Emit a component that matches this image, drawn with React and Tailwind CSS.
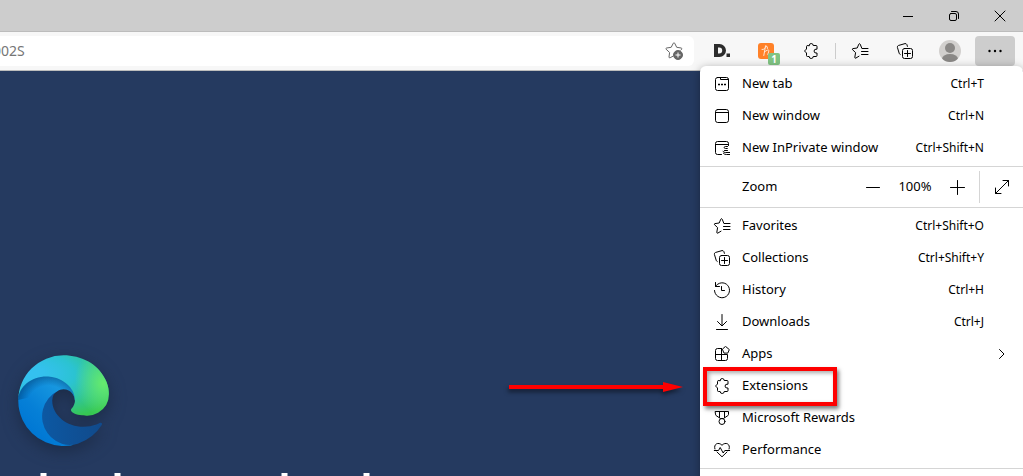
const Icon = ({ children, className = 'size-4' }) => (
  <svg viewBox="0 0 16 16" fill="none" stroke="currentColor" strokeLinecap="round" strokeLinejoin="round" className={`shrink-0 ${className}`} aria-hidden="true">
    {children}
  </svg>
);

const TabIcon = () => (
  <Icon>
    <rect x="1.5" y="1.5" width="13" height="13" rx="2" />
    <path d="M6.5 1.5v2h8" />
    <path d="M4 8.5h2M7 8.5h2M10 8.5h2" strokeWidth="1.5" strokeLinecap="butt" />
  </Icon>
);

const WindowIcon = () => (
  <Icon>
    <rect x="1.5" y="1.5" width="13" height="13" rx="2.2" />
    <path d="M1.5 4.5h13" />
  </Icon>
);

const PrivateIcon = () => (
  <Icon>
    <path d="M7.5 14.5h-4a2 2 0 0 1-2-2v-9a2 2 0 0 1 2-2h9a2 2 0 0 1 2 2v2M1.5 4.5h13" />
    <path d="M13.5 6.5h-2q-1.3 0-1.3 1t1.3 1h1.8M13.5 10.5h-3M16 12.5h-4.5q-1.5 0-2.5-1M16 14.5h-3.5q-2 0-3-1" />
  </Icon>
);

const FavoritesIcon = () => (
  <Icon className="size-4 overflow-visible">
    <path d="M13 5.500H9.900L8.200 1.200q-.7-1.200-1.400 0L5.200 5 .9 5.600q-1.100.3-.4 1.100l3.100 2.900-.8 4.700q-.1 1.200 1 .8l3.200-1.900" />
    <path d="M10.500 5.500H16M9.500 8.500H16M9.500 11.500H16" />
  </Icon>
);

const CollectionsIcon = () => (
  <Icon className="size-4 overflow-visible">
    <path d="M3.200 11.500q-.8-.3-1-1.200L.4 4.400q-.3-1.400 1-1.900L8 .6q1.300-.2 1.900 1l.5 1.800" />
    <rect x="5.500" y="5.500" width="10" height="10" rx="2" />
    <path d="M10.500 7.500v6M7.500 10.500h6" />
  </Icon>
);

const HistoryIcon = () => (
  <Icon className="size-4 overflow-visible">
    <path d="M1.500.5v4h4" />
    <path d="M1.500 4.500A7.500 7.500 0 1 1 .5 8.500M7.500 4.500v4h3" />
  </Icon>
);

const DownloadIcon = () => (
  <Icon>
    <path d="M8 .5v11M3.500 7.500 8 12l4.500-4.500M2.500 15.500h11" />
  </Icon>
);

const AppsIcon = () => (
  <Icon>
    <path d="M7.500 2.500h-4a2 2 0 0 0-2 2v8a2 2 0 0 0 2 2h8a2 2 0 0 0 2-2v-4h-12M7.500 2.500v12" />
    <path d="m11.800.6 3.500 3-1.500 3.500h-3.800L8.500 3.600z" />
  </Icon>
);

const PuzzleIcon = () => (
  <Icon>
    <path d="M6.200 2.500a2 2 0 0 1 4 0H13q1 0 1 1v2.700h-1a1.900 1.900 0 0 0 0 3.800h1v2.500q0 1-1 1h-2.800a2 2 0 0 1-4 0H4.500q-1 0-1-1V10L1.500 8l2-2V3.500q0-1 1-1z" />
  </Icon>
);

const RewardsIcon = () => (
  <Icon>
    <path d="M1.500 1.500h13v3q0 .7-.6 1.100L9.500 8.500h-3L2.100 5.600q-.6-.4-.6-1.100zM5.500 1.500v6M10.500 1.500v6" />
    <circle cx="8" cy="11.500" r="3" />
  </Icon>
);

const PerformanceIcon = () => (
  <Icon className="size-4 overflow-visible">
    <path d="M.9 7C-.8 2 4.500-.6 8 3.300 11.500-.6 16.800 2 15.100 7M3 10l5 4.800 5-4.800" />
    <path d="M.3 8.500h4.200l1.700-3 3 5.500 1.600-2.500h4.900" />
  </Icon>
);

const SWIRL = 'M156.94 153.78c-.81 1.05-3.3 2.5-3.3 5.66 0 2.61 1.7 5.12 4.72 7.23 14.38 10 41.49 8.68 41.56 8.68a59.56 59.56 0 0 0 30.27-8.35A61.38 61.38 0 0 0 260.62 114.12c.26-22.41-8-37.31-11.34-43.91C228.09 28.76 182.35 4.92 132.61 4.92a128 128 0 0 0-128 126.2c.48-36.54 36.8-66.05 80-66.05 3.5 0 23.46.34 42 10.07 16.34 8.58 24.9 18.94 30.85 29.21 6.18 10.67 7.28 24.15 7.28 29.52s-2.74 13.33-7.8 19.91z';

const EdgeLogo = () => (
  <svg viewBox="4 4 257 257" className="size-[91px] overflow-visible drop-shadow-[0_5px_8px_rgba(25,40,65,0.8)]" role="img" aria-label="Microsoft Edge">
    <defs>
      <linearGradient id="deep" x1="63" x2="241" y1="177" y2="177" gradientUnits="userSpaceOnUse">
        <stop stopColor="#0c59a4" />
        <stop offset="1" stopColor="#114a8b" />
      </linearGradient>
      <linearGradient id="blue" x1="157" x2="46" y1="100" y2="221" gradientUnits="userSpaceOnUse">
        <stop stopColor="#1b9de2" />
        <stop offset=".2" stopColor="#1595df" />
        <stop offset=".67" stopColor="#0680d7" />
        <stop offset="1" stopColor="#0078d4" />
      </linearGradient>
      <radialGradient id="shade" cx="90" cy="152" r="88" gradientUnits="userSpaceOnUse">
        <stop offset=".7" stopColor="#003b70" stopOpacity="0" />
        <stop offset="1" stopColor="#003b70" stopOpacity=".45" />
      </radialGradient>
      <radialGradient id="cyan" cx="0" cy="0" r="202" gradientUnits="userSpaceOnUse" gradientTransform="matrix(-.04 1 -2.13 -.08 30 55)">
        <stop stopColor="#35c1f1" />
        <stop offset=".11" stopColor="#34c1ed" />
        <stop offset=".23" stopColor="#2fc2df" />
        <stop offset=".31" stopColor="#2bc3d2" />
        <stop offset=".67" stopColor="#36c752" />
      </radialGradient>
      <radialGradient id="lime" cx="0" cy="0" r="97" gradientUnits="userSpaceOnUse" gradientTransform="matrix(.28 .96 -.78 .23 245 84)">
        <stop stopColor="#66eb6e" />
        <stop offset="1" stopColor="#66eb6e" stopOpacity="0" />
      </radialGradient>
    </defs>
    <path fill="url(#deep)" d="M235.68 195.46a93.73 93.73 0 0 1-10.54 4.71 101.87 101.87 0 0 1-35.9 6.46c-47.32 0-88.54-32.55-88.54-74.32A31.48 31.48 0 0 1 117.13 105c-42.8 1.8-53.8 46.4-53.8 72.53 0 73.88 68.09 81.37 82.76 81.37 7.91 0 19.84-2.3 27-4.56l1.31-.44A128.34 128.34 0 0 0 241 201.1a4.1 4.1 0 0 0-5.32-5.64z" />
    <path fill="url(#blue)" d="M110.34 246.34A79.2 79.2 0 0 1 87.6 225a80.72 80.72 0 0 1 29.53-120c3.12-1.47 8.45-4.05 15.54-4a32.35 32.35 0 0 1 25.69 13 31.88 31.88 0 0 1 6.36 18.66c0-.21 24.46-79.6-80-79.6-43.9 0-80 41.66-80 78.21a130.15 130.15 0 0 0 12.11 56 128 128 0 0 0 156.38 67.11 75.55 75.55 0 0 1-62.78-8z" />
    <path fill="url(#shade)" d="M117.13 105c3.12-1.47 8.45-4.05 15.54-4a32.35 32.35 0 0 1 25.69 13 31.88 31.88 0 0 1 6.36 18.66c0-.21 24.46-79.6-80-79.6-43.9 0-80 41.66-80 78.21z" />
    <path fill="url(#cyan)" d={SWIRL} />
    <path fill="url(#lime)" d={SWIRL} />
  </svg>
);

const windowItems = [
  { label: 'New tab', keys: 'Ctrl+T', icon: <TabIcon /> },
  { label: 'New window', keys: 'Ctrl+N', icon: <WindowIcon /> },
  { label: 'New InPrivate window', keys: 'Ctrl+Shift+N', icon: <PrivateIcon /> },
];

const toolItems = [
  { label: 'Favorites', keys: 'Ctrl+Shift+O', icon: <FavoritesIcon /> },
  { label: 'Collections', keys: 'Ctrl+Shift+Y', icon: <CollectionsIcon /> },
  { label: 'History', keys: 'Ctrl+H', icon: <HistoryIcon /> },
  { label: 'Downloads', keys: 'Ctrl+J', icon: <DownloadIcon /> },
  { label: 'Apps', submenu: true, icon: <AppsIcon /> },
  { label: 'Extensions', marked: true, icon: <PuzzleIcon /> },
  { label: 'Microsoft Rewards', icon: <RewardsIcon /> },
  { label: 'Performance', icon: <PerformanceIcon /> },
];

// red frame and arrow that point at a menu entry
const Marker = () => (
  <>
    <span className="pointer-events-none absolute -top-[3px] left-[3px] h-[39px] w-[134px] border-4 border-[#fe0000] shadow-[2px_3px_4px_rgba(0,0,0,0.5),inset_2px_2px_4px_rgba(0,0,0,0.35)]" />
    <svg viewBox="0 0 174 12" className="absolute top-[11px] right-full mr-[17px] h-3 w-[174px] overflow-visible drop-shadow-[-1px_3px_2px_rgba(0,0,0,0.5)]" aria-hidden="true">
      <path d="M0 4h154V1l20 5-20 5V8H0z" fill="#fe0000" />
    </svg>
  </>
);

const MenuItem = ({ item }) => (
  <li className="relative">
    <button type="button" className="flex h-8 w-full items-center gap-3 pl-[14px] pr-[39px] text-left hover:bg-gray-100">
      {item.icon}
      <span className="flex-1 whitespace-nowrap">{item.label}</span>
      {item.keys && <span className="text-xs">{item.keys}</span>}
      {item.submenu && (
        <Icon className="size-4 -mr-[26px]">
          <path d="m5.500 3.500 4.500 4.500-4.500 4.500" />
        </Icon>
      )}
    </button>
    {item.marked && <Marker />}
  </li>
);

const Menu = () => (
  <nav className="absolute top-[66px] right-0 w-[323px] rounded-t-md bg-white pt-0.5 pb-8 text-[13px] text-black shadow-[0_2px_10px_rgba(0,0,0,0.35)]">
    <ul>
      {windowItems.map((item) => <MenuItem key={item.label} item={item} />)}
    </ul>
    <div className="mt-0.5 flex h-[42px] items-center border-y border-[#d5d5d5] pl-[42px]">
      <span className="flex-1">Zoom</span>
      <button type="button" aria-label="Zoom out" className="flex w-11 justify-center">
        <Icon><path d="M1.500 8.500h13" /></Icon>
      </button>
      <span className="w-10 text-center">100%</span>
      <button type="button" aria-label="Zoom in" className="flex w-11 justify-center">
        <Icon><path d="M1.500 8.500h14M8.500 1.500v14" /></Icon>
      </button>
      <button type="button" aria-label="Full screen" className="flex h-8 w-11 items-center justify-center border-l border-[#d5d5d5]">
        <Icon><path d="M9 1.500h5.500V7M1.500 9v5.500H7M14.500 1.500l-13 13" /></Icon>
      </button>
    </div>
    <ul className="mt-0.5">
      {toolItems.map((item) => <MenuItem key={item.label} item={item} />)}
    </ul>
    <hr className="mt-0.5 border-[#d5d5d5]" />
  </nav>
);

const TitleBar = () => (
  <div className="flex h-8 justify-end border-b border-[#bcbcbc] bg-[#cdcdcd] text-black">
    <button type="button" aria-label="Minimize" className="flex w-[46px] items-center justify-center">
      <Icon><path d="M3 8.500h10" strokeLinecap="butt" /></Icon>
    </button>
    <button type="button" aria-label="Restore" className="flex w-[46px] items-center justify-center">
      <Icon>
        <rect x="3.500" y="5.500" width="7" height="7" rx="1.500" />
        <path d="M5.500 3.500h4.500a2.500 2.500 0 0 1 2.500 2.500v4.500" />
      </Icon>
    </button>
    <button type="button" aria-label="Close" className="flex w-[46px] items-center justify-center">
      <Icon><path d="m3 3 10 10M13 3 3 13" /></Icon>
    </button>
  </div>
);

const ToolButton = ({ label, children, className = '' }) => (
  <button type="button" aria-label={label} className={`relative flex h-[30px] w-10 shrink-0 items-center justify-center rounded-sm ${className}`}>
    {children}
  </button>
);

const Toolbar = () => (
  <div className="flex h-[39px] items-start gap-[7px] border-b border-[#bdbdbd] bg-[#f7f7f7] pt-1 pr-2 text-black">
    <div className="flex h-[30px] flex-1 items-center rounded-r-md bg-white pr-[10px]">
      <input aria-label="Address" defaultValue="002S" className="min-w-0 flex-1 -indent-[7px] text-sm text-[#767676] outline-none" />
      <button type="button" aria-label="Add to favorites" className="text-[#666]">
        <svg viewBox="0 0 20 20" className="size-5" fill="none" stroke="currentColor" strokeLinejoin="round" aria-hidden="true">
          <path d="m5 16 .6-4.500-3.500-3.300q-.6-.9.500-1.200l4.600-.7L9.300 2.200q.7-1.200 1.400 0l2 4.100 4.500.7q1 .3.500 1.200L16.500 9.500M5 16q0 1.300 1.200.7L9 15.200" />
          <circle cx="14" cy="14" r="4.500" fill="currentColor" />
          <path d="M14 11.500v5M11.500 14h5" stroke="#fff" />
        </svg>
      </button>
    </div>
    <div className="flex items-center gap-[5px]">
      <ToolButton label="Dashlane">
        <svg viewBox="0 0 18 14" className="h-3.5 w-[18px] overflow-visible" aria-hidden="true">
          <path fillRule="evenodd" fill="#2d2d2d" d="M2 0h5.500a6.500 6.500 0 0 1 0 13H2zM6 3.500v6h1.200a3 3 0 0 0 0-6z" />
          <rect x="14.500" y="9.500" width="3.500" height="3.500" fill="#2d2d2d" />
        </svg>
      </ToolButton>
      <ToolButton label="Honey">
        <svg viewBox="0 0 16 16" className="size-4" fill="none" aria-hidden="true">
          <rect width="16" height="16" rx="3" fill="#ff8128" />
          <path d="M7.500 3 5.800 12.500M4 6.500q3 .5 4-3.500M6.500 9q3.500-3 4.500-1.500L9.800 11.500q0 1 1 .8M8 3q2 0 1.500 2.500" stroke="#ffe5d2" strokeLinecap="round" />
        </svg>
        <span className="absolute top-[17px] left-[22px] flex h-3 w-3 items-center justify-center rounded-[2px] bg-[#80c483] text-[10px] font-bold text-white">1</span>
      </ToolButton>
      <ToolButton label="Extensions"><PuzzleIcon /></ToolButton>
      <span className="-mx-px h-4 w-px bg-[#ccc]" />
      <ToolButton label="Favorites"><FavoritesIcon /></ToolButton>
      <ToolButton label="Collections"><CollectionsIcon /></ToolButton>
      <ToolButton label="Profile">
        <svg viewBox="0 0 22 22" className="size-[22px]" aria-hidden="true">
          <clipPath id="face"><circle cx="11" cy="11" r="11" /></clipPath>
          <g clipPath="url(#face)">
            <rect width="22" height="22" fill="#d2d0ce" />
            <circle cx="11" cy="8" r="5" fill="#8a8886" />
            <ellipse cx="11" cy="19" rx="8" ry="5" fill="#8a8886" />
          </g>
        </svg>
      </ToolButton>
      <ToolButton label="Settings and more" className="bg-[#cdcdcd]">
        <svg viewBox="0 0 16 16" className="size-4" aria-hidden="true">
          <circle cx="2.500" cy="8" r="1.200" />
          <circle cx="8" cy="8" r="1.200" />
          <circle cx="13.500" cy="8" r="1.200" />
        </svg>
      </ToolButton>
    </div>
  </div>
);

const App = () => {
  return (
    <div className="relative flex h-screen flex-col overflow-hidden bg-[#253a60] font-['Noto_Sans','Open_Sans',sans-serif]">
      <TitleBar />
      <Toolbar />
      <main className="flex flex-1 flex-col items-start justify-end">
        <div className="pl-[18px]"><EdgeLogo /></div>
        <svg viewBox="0 0 420 3" className="mt-[27px] h-[3px] w-[420px]" fill="#fff" aria-hidden="true">
          <path d="M40.500 0h6v3h-6zM114.500 0h6v3h-6zM281.500 0h6v3h-6zM363.500 0h6v3h-6z" />
        </svg>
      </main>
      <Menu />
    </div>
  );
};

export default App;
